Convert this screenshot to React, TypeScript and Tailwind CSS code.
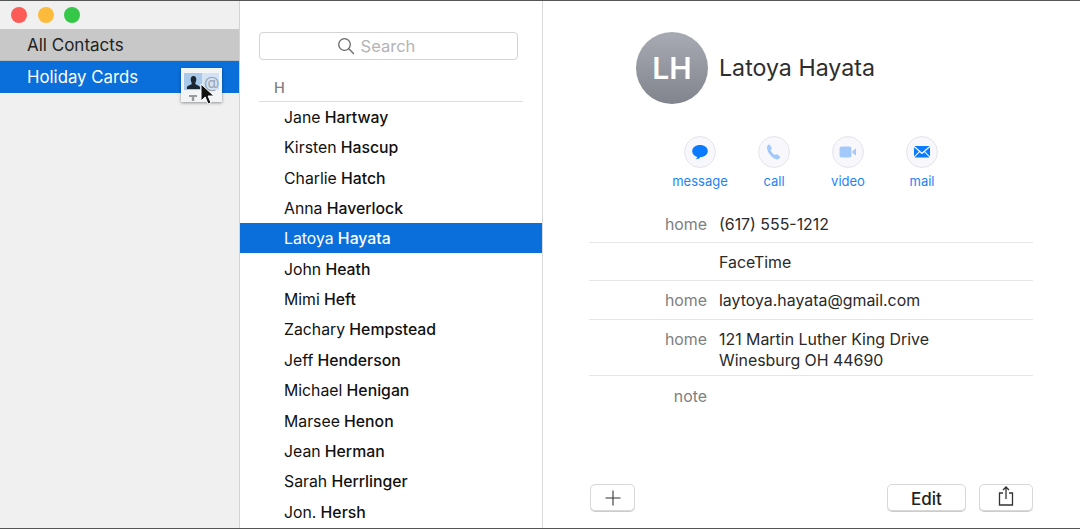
const contacts = [
  'Jane Hartway',
  'Kirsten Hascup',
  'Charlie Hatch',
  'Anna Haverlock',
  'Latoya Hayata',
  'John Heath',
  'Mimi Heft',
  'Zachary Hempstead',
  'Jeff Henderson',
  'Michael Henigan',
  'Marsee Henon',
  'Jean Herman',
  'Sarah Herrlinger',
  'Jon. Hersh',
];

function splitName(name: string) {
  const i = name.lastIndexOf(' ');
  return [name.slice(0, i), name.slice(i)];
}

function MessageIcon() {
  return (
    <svg viewBox="0 0 18 18" className="h-[18px] w-[18px]">
      <path fill="#0a7aff" d="M9 2C4.600 2 1.200 4.600 1.200 8s3 5.600 5.200 5.900c-.3 1-1 1.900-1.900 2.300 1.900.2 3.700-.5 5-2.200C13.600 14 16.800 11.400 16.800 8 16.800 4.600 13.400 2 9 2z" />
    </svg>
  );
}

function CallIcon() {
  return (
    <svg viewBox="0 0 18 18" className="h-[18px] w-[18px]">
      <path fill="#a3c9fb" d="M3.300 1.800c.5-.4 1.200-.3 1.600.2l1.700 2.500c.3.500.3 1.100-.1 1.500l-.9 1c.5 1.900 2.200 4 4.300 5l1.100-.7c.5-.3 1.100-.2 1.500.2l2.300 2c.5.4.5 1.100.1 1.600-1 1-2.300 1.600-3.600 1.300C6.300 14.200 2.800 9.800 2 5.200c-.2-1.300.3-2.500 1.300-3.400z" />
    </svg>
  );
}

function VideoIcon() {
  return (
    <svg viewBox="0 0 18 18" className="h-[18px] w-[18px]">
      <rect x="0.500" y="3.500" width="12" height="11" rx="2.200" fill="#a3c9fb" />
      <path fill="#a3c9fb" d="M13.500 8.300 17 5.200v7.600l-3.500-3.100z" />
    </svg>
  );
}

function MailIcon() {
  return (
    <svg viewBox="0 0 18 18" className="h-[18px] w-[18px]">
      <path fill="#0a7aff" d="M1.500 3h15L9 9.500zM1 4.200l4.900 4.300L1 13.600zM17 4.200v9.400l-4.900-5.100zM6.600 9.200 9 11.200l2.400-2 5.100 5.300h-15z" />
    </svg>
  );
}

const actions = [
  { label: 'message', icon: <MessageIcon /> },
  { label: 'call', icon: <CallIcon /> },
  { label: 'video', icon: <VideoIcon /> },
  { label: 'mail', icon: <MailIcon /> },
];

function Field({ label, children, className }: { label?: string; children?: React.ReactNode; className: string }) {
  return (
    <div className={`flex leading-[21px] ${className}`}>
      <div className="w-[118px] shrink-0 text-right text-[#808080]">{label}</div>
      <div className="ml-[12px] text-[#2a2a2a]">{children}</div>
    </div>
  );
}

export default function App() {
  return (
    <div className="relative flex h-[529px] w-[1080px] overflow-hidden border-y border-[#555] bg-white font-['Inter','Liberation_Sans',sans-serif] text-[15.900px]">
      {/* Sidebar */}
      <aside className="flex w-[240px] shrink-0 flex-col border-r border-[#d4d4d4] bg-[#f0f0f0]">
        <div className="flex h-[28px] items-center gap-[10.500px] pb-[1px] pl-[11px]">
          <span className="h-4 w-4 rounded-full bg-[#fc5b57]" />
          <span className="h-4 w-4 rounded-full bg-[#fdbb3b]" />
          <span className="h-4 w-4 rounded-full bg-[#35c748]" />
        </div>
        <div className="flex h-[32px] items-center border-b border-[#b4b9c0] bg-[#c8c8c8] pl-[27px] pt-[2px] text-[17px] text-[#222]">All Contacts</div>
        <div className="flex h-[32px] items-center bg-[#0a6fdb] pl-[27px] pt-[2px] text-[16.800px] text-white">Holiday Cards</div>
      </aside>

      {/* List */}
      <section className="flex w-[303px] shrink-0 flex-col border-r border-[#d9d9d9]">
        <div className="mx-[19px] mt-[31px] flex h-[28px] w-[259px] items-center justify-center gap-[6px] rounded-[4px] border border-[#d4d4d4] pr-[25px] text-[16.500px] text-[#b4b4b4]">
          <svg viewBox="0 0 18 18" className="h-[18px] w-[18px]" fill="none" stroke="#666" strokeWidth="1.300" strokeLinecap="round">
            <circle cx="7.500" cy="7.500" r="5.800" />
            <path d="m11.800 11.800 4.700 4.700" />
          </svg>
          Search
        </div>
        <div className="mx-[19px] mt-[16px] h-[26px] w-[264px] border-b border-[#dedede] pl-[15px] text-[14.500px] font-medium leading-[24px] text-[#808080]">H</div>
        <ul className="mt-[-0.600px]">
          {contacts.map((name, i) => {
            const [first, last] = splitName(name);
            const selected = i === 4;
            return (
              <li
                key={name}
                className={`flex h-[30.400px] items-center whitespace-pre pl-[44px] pt-[2px] text-[15.800px] ${selected ? 'bg-[#0a6fdb] text-white' : 'text-[#111]'}`}
              >
                {first}
                <span className="font-medium">{last}</span>
              </li>
            );
          })}
        </ul>
      </section>

      {/* Detail */}
      <main className="flex min-w-0 flex-1 flex-col pl-[46px] pr-[47px]">
        <div className="ml-[47px] mt-[31px] flex items-center">
          <div className="flex h-[72px] w-[72px] items-center justify-center rounded-full bg-gradient-to-b from-[#a8abb4] to-[#82848d] text-[30px] font-semibold text-white">LH</div>
          <div className="ml-[11px] text-[23.200px] text-[#2e2e2e]">Latoya Hayata</div>
        </div>
        <div className="mt-[32px] flex pl-[74px]">
          {actions.map((a) => (
            <div key={a.label} className="flex w-[74px] flex-col items-center">
              <div className="flex h-[32px] w-[32px] items-center justify-center rounded-full border border-[#e4e4ea] bg-[#f8f8fc]">{a.icon}</div>
              <div className="mt-[4px] text-[13px] leading-[18px] text-[#1d84f7]">{a.label}</div>
            </div>
          ))}
        </div>
        <div className="mt-[14.800px]">
          <Field label="home" className="border-b border-[#e6e6e6] pb-[7.300px] pt-[9px]">(617) 555-1212</Field>
          <Field className="border-b border-[#e6e6e6] pb-[7.300px] pt-[9px]">FaceTime</Field>
          <Field label="home" className="border-b border-[#e6e6e6] pb-[7.300px] pt-[9px]">laytoya.hayata@gmail.com</Field>
          <Field label="home" className="border-b border-[#e6e6e6] pb-[4px] pt-[9px]">
            121 Martin Luther King Drive
            <br />
            Winesburg OH 44690
          </Field>
          <Field label="note" className="pt-[10px]" />
        </div>
        <div className="mb-[17px] ml-[1px] mt-auto flex items-center">
          <button className="flex h-[27px] w-[45px] items-center justify-center rounded-[5px] border border-[#d8d8d8] shadow-[0_1px_0_#ccc]">
            <svg viewBox="0 0 16 16" className="h-4 w-4" stroke="#333" strokeWidth="1.100">
              <path d="M8 0.500v15M0.500 8h15" />
            </svg>
          </button>
          <button className="ml-auto h-[27px] w-[79px] rounded-[5px] border border-[#d8d8d8] pt-[2px] text-[17px] font-medium text-[#222] shadow-[0_1px_0_#ccc]">Edit</button>
          <button className="ml-[13px] flex h-[27px] w-[54px] items-center justify-center rounded-[5px] border border-[#d8d8d8] shadow-[0_1px_0_#ccc]">
            <svg viewBox="0 0 16 20" className="mb-[3px] h-[20px] w-[16px]" fill="none" stroke="#333" strokeWidth="1.300">
              <path d="M5 7H1.500v12h13V7H11M8 13V1M5 4l3-3 3 3" />
            </svg>
          </button>
        </div>
      </main>

      {/* Drag badge */}
      <div className="absolute left-[181px] top-[67px] h-[34px] w-[41px] bg-[#f2f4f6] shadow-[0_1px_3px_rgba(0,0,0,0.400)]">
        <div className="absolute left-[3px] top-[5px] h-[17px] w-[35px] bg-[#d3e3f5]" />
        <div className="absolute left-[3px] top-[5px] flex h-[17px] w-[18px] items-end justify-center bg-[#a9c8ea]">
          <svg viewBox="0 0 16 16" className="h-[15px] w-[15px]">
            <path fill="#1c2733" d="M8 1c2 0 3 1.600 3 3.500S10 8 9.800 9c.4 1.400 4.200 2 5.200 4v2H1v-2c1-2 4.800-2.600 5.200-4C6 8 5 6.500 5 4.500S6 1 8 1z" />
          </svg>
        </div>
        <span className="absolute left-[23px] top-[4px] text-[16px] leading-[20px] text-[#9aa5b2]">@</span>
        <div className="absolute bottom-[1px] left-[8px] h-[6px] w-[8px] bg-[#9a9a9a] [clip-path:polygon(0_0,100%_0,100%_35%,65%_35%,65%_100%,35%_100%,35%_35%,0_35%)]" />
      </div>

      {/* Cursor */}
      <svg viewBox="0 0 16 24" className="absolute left-[199px] top-[82px] h-[24px] w-[16px]">
        <path fill="#111" stroke="#fff" strokeWidth="1" d="M2 1v17l4.200-4 2.800 7 3-1.300-2.900-6.700H15z" />
      </svg>
    </div>
  );
}
